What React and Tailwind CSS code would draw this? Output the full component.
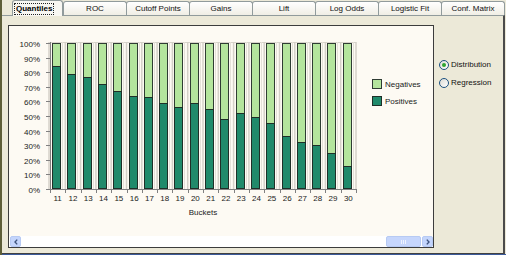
import React from "react";

const data = [84, 79, 77, 72, 67, 64, 63, 59, 56, 59, 55, 48, 52, 49, 45, 36, 32, 30, 25, 16];
const tabs = ["ROC", "Cutoff Points", "Gains", "Lift", "Log Odds", "Logistic Fit", "Conf. Matrix"];

function Chart() {
  const x0 = 41, top = 17, bottom = 163, H = 146, cw = 15.3;
  const xr = x0 + 20 * cw;
  return (
    <svg width="424" height="210" className="block" style={{ fontSize: 8 }}>
      <line x1={x0} x2={xr} y1={16.5} y2={16.5} stroke="#d8d4cc" />
      <line x1={x0 - 1} x2={x0 - 1} y1={16} y2={163} stroke="#d4d0c8" strokeWidth={1.5} />
      {data.map((p, i) => {
        const xb = x0 + (i + 1) * cw;
        const bx = Math.round(x0 + 2 + i * cw);
        return (
          <g key={"g" + i}>
            <line x1={xb} x2={xb} y1={16} y2={163} stroke="#d4d0c8" strokeWidth={1.5} />
            <line x1={bx + 10.5} x2={bx + 10.5} y1={16} y2={163} stroke="#e4e0d8" />
          </g>
        );
      })}
      {data.map((p, i) => {
        const bx = Math.round(x0 + 2 + i * cw);
        const py = Math.round(bottom - (H * p) / 100);
        return (
          <g key={"b" + i}>
            <rect x={bx + 0.5} y={top + 0.5} width={8} height={bottom - top - 1} fill="#b4e59d" stroke="#2f3c33" />
            <rect x={bx + 0.5} y={py + 0.5} width={8} height={bottom - py - 1} fill="#208a6b" stroke="#1f2f28" />
          </g>
        );
      })}
      <line x1={x0 + 0.5} x2={x0 + 0.5} y1={16} y2={164} stroke="#808080" />
      <line x1={x0} x2={xr} y1={163.5} y2={163.5} stroke="#808080" />
      {Array.from({ length: 11 }).map((_, k) => {
        const y = Math.round(bottom - (H * k) / 10) + 0.5;
        return (
          <g key={"y" + k}>
            <line x1={37} x2={41} y1={y} y2={y} stroke="#808080" />
            <text x={31} y={y + 3} textAnchor="end" fill="#1a1a1a">{k * 10}%</text>
          </g>
        );
      })}
      {Array.from({ length: 21 }).map((_, k) => {
        const x = Math.round(x0 + k * cw) + 0.5;
        return <line key={"t" + k} x1={x} x2={x} y1={163} y2={167} stroke="#808080" />;
      })}
      {data.map((_, i) => (
        <text key={"l" + i} x={x0 + i * cw + cw / 2} y={175} textAnchor="middle" fill="#1a1a1a">
          {11 + i}
        </text>
      ))}
      <text x={194} y={189} textAnchor="middle" fill="#1a1a1a">Buckets</text>
      <rect x={363.5} y={53.5} width={9} height={9} fill="#b4e59d" stroke="#2f3c33" />
      <text x={376} y={61} fill="#1a1a1a">Negatives</text>
      <rect x={363.5} y={70.5} width={9} height={9} fill="#208a6b" stroke="#1f2f28" />
      <text x={376} y={78} fill="#1a1a1a">Positives</text>
    </svg>
  );
}

function Chevron({ dir }) {
  const d = dir === "left" ? "M3.2 0.6 L1 3 L3.2 5.4" : "M0.8 0.6 L3 3 L0.8 5.4";
  return (
    <svg width="4" height="6" className="block">
      <path d={d} stroke="#3f547e" strokeWidth="1.4" fill="none" />
    </svg>
  );
}

function Radio({ checked, label }) {
  return (
    <div className="flex h-[18px] items-center">
      <div className="flex h-[10px] w-[10px] items-center justify-center rounded-full border border-[#1c5180] bg-linear-to-br from-[#dcdbd4] to-white">
        {checked && <div className="h-[4px] w-[4px] rounded-full bg-[#2fa52f]" />}
      </div>
      <span className="ml-[2px] text-[#111]">{label}</span>
    </div>
  );
}

export default function App() {
  return (
    <div className="flex h-[255px] w-[506px] flex-col overflow-hidden border-l-2 border-[#5e5e38] bg-[#ece9d8] font-['Liberation_Sans',Arial,sans-serif] text-[8px] leading-none">
      <div className="relative z-10 flex h-[15px] pl-[10px]">
        <div className="flex h-[16px] w-[51px] items-start rounded-t-[3px] border-x border-t border-[#919b9c] bg-[#f8f7f2] pl-[1px] pt-[2px]">
          <span className="border border-dotted border-[#222] px-[1px] py-[1px] font-bold text-black">Quantiles</span>
        </div>
        {tabs.map((t, i) => (
          <div
            key={t}
            className={
              "mt-[1px] flex h-[14px] w-[64px] items-center justify-center rounded-t-[3px] border-x border-t border-[#919b9c] bg-linear-to-b from-white to-[#f0eee5] text-[#111] " +
              (i === 0 ? "" : "-ml-[1px]")
            }
          >
            {t}
          </div>
        ))}
      </div>
      <div className="flex h-[239px] w-[503px] border-t border-r-2 border-b border-t-[#919b9c] border-r-[#4b4b4b] border-b-[#404040] pl-[6px] pt-[9px]">
        <div className="flex h-[223px] w-[426px] flex-col border border-[#3c3c3c] bg-[#fdfaf3]">
          <Chart />
          <div className="flex h-[11px] bg-white">
            <div className="ml-[1px] flex w-[11px] items-center justify-center rounded-[2px] border border-[#b7caf3] bg-[#c4d5fc]">
              <Chevron dir="left" />
            </div>
            <div className="flex-1" />
            <div className="flex w-[35px] items-center justify-center gap-[1px] rounded-[2px] border border-[#b7caf3] bg-[#c6d6fc]">
              <div className="h-[4px] w-[1px] bg-[#eef3ff]" />
              <div className="h-[4px] w-[1px] bg-[#eef3ff]" />
              <div className="h-[4px] w-[1px] bg-[#eef3ff]" />
            </div>
            <div className="w-[1px]" />
            <div className="flex w-[11px] items-center justify-center rounded-[2px] border border-[#b7caf3] bg-[#c4d5fc]">
              <Chevron dir="right" />
            </div>
          </div>
        </div>
        <div className="flex flex-col pl-[5px] pt-[31px]">
          <Radio checked label="Distribution" />
          <Radio label="Regression" />
        </div>
      </div>
      <div className="h-[1px] bg-[#3b5a9a]" />
    </div>
  );
}
